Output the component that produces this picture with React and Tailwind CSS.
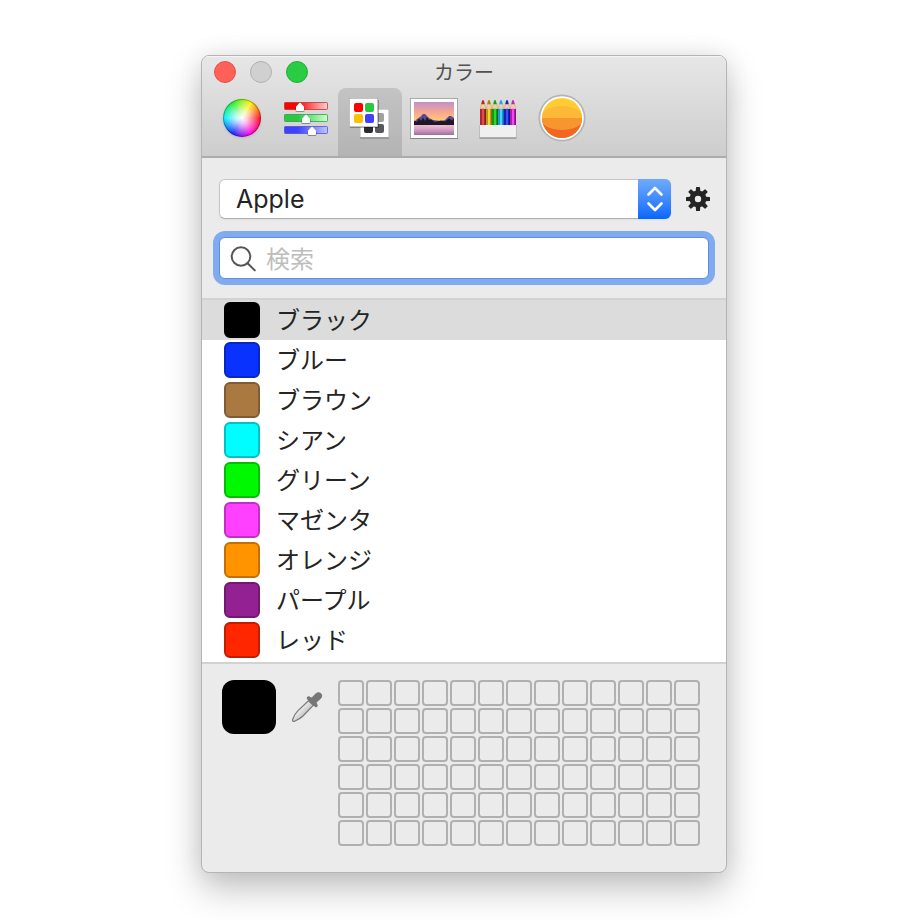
import { useState } from "react";
import clsx from "clsx";

const colors = [
  { name: "ブラック", swatch: "bg-[#000000] border-[#000000]" },
  { name: "ブルー", swatch: "bg-[#0a32ff] border-[#0726c2]" },
  { name: "ブラウン", swatch: "bg-[#aa7942] border-[#815c32]" },
  { name: "シアン", swatch: "bg-[#00fdff] border-[#00c0c2]" },
  { name: "グリーン", swatch: "bg-[#00f900] border-[#00bd00]" },
  { name: "マゼンタ", swatch: "bg-[#ff40ff] border-[#c230c2]" },
  { name: "オレンジ", swatch: "bg-[#ff9300] border-[#c27000]" },
  { name: "パープル", swatch: "bg-[#942192] border-[#70196f]" },
  { name: "レッド", swatch: "bg-[#ff2600] border-[#c21d00]" },
];

const lights = [
  { label: "閉じる", tone: "bg-[#ff6159] border-[#e25048]" },
  { label: "しまう", tone: "bg-[#d0d0d0] border-[#b0b0b0]" },
  { label: "拡大", tone: "bg-[#29cc42] border-[#1fb033]" },
];

function WheelIcon() {
  return (
    <span className="block size-[38px] rounded-full border border-black/30 bg-[radial-gradient(circle,#fff_0%,rgba(255,255,255,0.75)_22%,rgba(255,255,255,0)_68%),conic-gradient(from_90deg,#ff1020,#ff00e0,#1a20ff,#00f0ff,#20f020,#fff000,#ff1020)] bg-origin-border shadow-sm" />
  );
}

function SlidersIcon() {
  const rows = [
    { id: "r", y: 1, a: "#ff0000", b: "#ffd0d0", s: "#b83030", x: 17 },
    { id: "g", y: 13, a: "#28c840", b: "#d0ffd0", s: "#2f9a42", x: 23 },
    { id: "b", y: 25, a: "#4040ff", b: "#c0c4ff", s: "#4450cf", x: 29 },
  ];
  return (
    <svg width="46" height="38" viewBox="0 -2 46 38" aria-hidden="true">
      <defs>
        {rows.map((r) => (
          <linearGradient key={r.id} id={"track-" + r.id}>
            <stop offset="0.3" stopColor={r.a} />
            <stop offset="1" stopColor={r.b} />
          </linearGradient>
        ))}
      </defs>
      {rows.map((r) => (
        <g key={r.id}>
          <rect x="1.5" y={r.y + 0.5} width="43" height="7" rx="0.8" fill={"url(#track-" + r.id + ")"} stroke={r.s} strokeOpacity="0.75" />
          <path d={`M${r.x - 4.4} ${r.y + 5.2}L${r.x - 1} ${r.y + 1.5}Q${r.x} ${r.y + 0.4} ${r.x + 1} ${r.y + 1.5}L${r.x + 4.4} ${r.y + 5.2}V${r.y + 9}Q${r.x + 4.4} ${r.y + 10} ${r.x + 3} ${r.y + 10}H${r.x - 3}Q${r.x - 4.4} ${r.y + 10} ${r.x - 4.4} ${r.y + 9}Z`} fill="#000" opacity="0.35" />
          <path d={`M${r.x - 4} ${r.y + 4.7}L${r.x - 1} ${r.y + 1.2}Q${r.x} ${r.y + 0.2} ${r.x + 1} ${r.y + 1.2}L${r.x + 4} ${r.y + 4.7}V${r.y + 8}Q${r.x + 4} ${r.y + 9} ${r.x + 3} ${r.y + 9}H${r.x - 3}Q${r.x - 4} ${r.y + 9} ${r.x - 4} ${r.y + 8}Z`} fill="#fff" />
        </g>
      ))}
    </svg>
  );
}

function PalettesIcon() {
  return (
    <svg width="42" height="42" viewBox="1 0 42 42" aria-hidden="true">
      <rect x="12" y="12.5" width="29" height="29" fill="#7d7d7d" />
      <rect x="12" y="12" width="29" height="28.6" fill="#b0b0b0" />
      <rect x="12.5" y="12.6" width="28" height="27.4" fill="#fff" />
      <rect x="27" y="16" width="9" height="9" rx="2" fill="#9fa1a5" />
      <rect x="16" y="27" width="9" height="9" rx="2" fill="#2c2c2e" />
      <rect x="27" y="27" width="9" height="9" rx="2" fill="#56585b" />
      <rect x="2" y="3" width="29" height="28" fill="#000" opacity="0.3" />
      <rect x="1" y="1" width="29" height="29" fill="#999" />
      <rect x="1.6" y="1.6" width="27.8" height="27.8" fill="#fff" />
      <rect x="6" y="6" width="9" height="9" rx="2" fill="#ff0000" />
      <rect x="17" y="6" width="9" height="9" rx="2" fill="#28c840" />
      <rect x="6" y="17" width="9" height="9" rx="2" fill="#ffc000" />
      <rect x="17" y="17" width="9" height="9" rx="2" fill="#4040ff" />
    </svg>
  );
}

function PictureIcon() {
  return (
    <svg width="48" height="42" viewBox="0 -1 48 42" aria-hidden="true">
      <defs>
        <linearGradient id="sky" x2="0" y2="1">
          <stop offset="0" stopColor="#bf92cc" />
          <stop offset="0.4" stopColor="#f3a393" />
          <stop offset="0.75" stopColor="#ffc27a" />
          <stop offset="1" stopColor="#ffe49a" />
        </linearGradient>
        <linearGradient id="lake" x2="0" y2="1">
          <stop offset="0" stopColor="#e9bcd0" />
          <stop offset="0.4" stopColor="#dca4c6" />
          <stop offset="1" stopColor="#9d6c9f" />
        </linearGradient>
      </defs>
      <rect width="48" height="41" fill="#858585" />
      <rect width="48" height="40" fill="#aaa" />
      <rect x="1" y="1" width="46" height="39" fill="#fff" />
      <rect x="4" y="4" width="40" height="23" fill="url(#sky)" />
      <path d="M4 24L7 21L10 19L13 16L15 16L19 20L23 22L31 23L35 22L39 18H41L44 20V27H4Z" fill="#5c4893" />
      <path d="M4 22.5L7 24L9 20.5L11 23L13 19.5L15 23L17 19L19 22L21 21.5L25 24L31 22.5L35 23.5L39 20.5L42 22.5L44 20.5V27H4Z" fill="#1d1726" />
      <rect x="4" y="27" width="40" height="10" fill="url(#lake)" />
      <path d="M17 28.5H36" stroke="#f2cadb" opacity="0.4" />
    </svg>
  );
}

function PencilsIcon() {
  const pencils = [
    ["#b0252b", "#ee5a5a", "#8c1a20", "#cc1f1f"],
    ["#b89a10", "#ffe84a", "#8a7000", "#a88400"],
    ["#0c9a14", "#3ee83e", "#086e0e", "#14a01c"],
    ["#1a98dc", "#6edcff", "#0d6fae", "#24a8e6"],
    ["#1420b8", "#4a66ff", "#0c1488", "#1828c0"],
    ["#b814b0", "#ff5cff", "#860c80", "#c824c4"],
  ];
  return (
    <svg width="38" height="42" viewBox="0 -2 38 42" aria-hidden="true">
      {pencils.map(([side, light, dark, tip], i) => (
        <g key={tip} transform={`translate(${1 + i * 6} 0)`}>
          <path d="M0.2 10L1.6 3.8H4.4L5.8 10Z" fill="#f1d0a5" stroke="#b98d62" strokeWidth="0.4" />
          <path d="M1.3 5.2L2.1 1.6Q3 0.4 3.9 1.6L4.7 5.2Z" fill={tip} />
          <rect y="10" width="6" height="17" fill={side} />
          <rect x="2" y="9.5" width="2" height="17.5" fill={light} opacity="0.75" />
          <rect x="5" y="10" width="1" height="17" fill={dark} />
        </g>
      ))}
      <rect x="0.5" y="26" width="37" height="13.5" fill="#aaa" />
      <rect x="1" y="26" width="36" height="12.5" fill="#f0f0f0" />
      <path d="M0.5 39H37.5" stroke="#8b8b8b" />
    </svg>
  );
}

function SunsetIcon() {
  return (
    <svg width="48" height="48" viewBox="0 0 48 48" aria-hidden="true">
      <defs>
        <clipPath id="disc">
          <circle cx="24" cy="24" r="20" />
        </clipPath>
      </defs>
      <circle cx="24" cy="24" r="23.5" fill="#b3b3b3" />
      <circle cx="24" cy="24" r="21.8" fill="#fff" />
      <g clipPath="url(#disc)">
        <rect width="48" height="48" fill="#ffcd32" />
        <rect y="24" width="48" height="24" fill="#f26522" />
        <path d="M2 24A22 12 0 0 1 46 24Z" fill="#fdb938" />
        <path d="M2 24A22 12 0 0 0 46 24Z" fill="#f7952e" />
      </g>
    </svg>
  );
}

function GearIcon() {
  const teeth = [0, 45, 90, 135, 180, 225, 270, 315];
  return (
    <svg width="24" height="24" viewBox="0 0 24 24" aria-hidden="true">
      <circle cx="12" cy="12" r="5.8" fill="none" stroke="#242424" strokeWidth="5.2" />
      {teeth.map((angle) => (
        <path key={angle} d="M9.7 4.5L10 0.6Q10 0 10.6 0H13.4Q14 0 14 0.6L14.3 4.5Z" fill="#242424" transform={`rotate(${angle} 12 12)`} />
      ))}
    </svg>
  );
}

function DropperIcon() {
  return (
    <svg width="32" height="32" viewBox="0 0 32 32" aria-hidden="true">
      <defs>
        <linearGradient id="glass" x1="0" y1="0" x2="1" y2="1">
          <stop offset="0.3" stopColor="#fafafa" />
          <stop offset="0.7" stopColor="#b8b8b8" />
        </linearGradient>
      </defs>
      <path d="M17.5 9.8L7 19.6Q3.6 23 1.7 28.2Q1 31 3.6 30.2Q8.6 28.2 12 25L22.3 14.3Z" fill="url(#glass)" stroke="#777" strokeWidth="1.2" />
      <path d="M16.6 5.5Q18 4.6 19.4 6L20.8 6.6L24.6 2.6Q27.6 0.2 30 2.2Q32.6 4.8 29.8 7.8L25.6 11.6L26.1 13Q27.4 14.6 26.1 15.7Q24.8 17 23.5 15.6L16.4 8.5Q15 7 16.6 5.5Z" fill="#777" />
    </svg>
  );
}

const tools = [
  { label: "カラーホイール", Icon: WheelIcon },
  { label: "カラースライダ", Icon: SlidersIcon },
  { label: "カラーパレット", Icon: PalettesIcon },
  { label: "イメージパレット", Icon: PictureIcon },
  { label: "鉛筆", Icon: PencilsIcon },
  { label: "サンセット", Icon: SunsetIcon },
];

export default function App() {
  const [tool, setTool] = useState(2);
  const [selected, setSelected] = useState(0);

  return (
    <main className="min-h-screen bg-white pt-[55px] pb-12 pl-2 font-['Inter','Noto_Sans_CJK_JP',sans-serif] text-[#242424]">
      <section
        aria-label="カラー"
        className="mx-auto w-full max-w-[526px] overflow-hidden rounded-lg border border-[#b4b4b4] bg-[#ebebeb] shadow-[0_16px_36px_rgba(0,0,0,0.24),0_0_24px_rgba(0,0,0,0.08)]"
      >
        <header className="border-b-2 border-[#acacac] bg-linear-to-b from-[#e7e7e7] to-[#cdcdcd] shadow-[inset_0_1px_0_#f4f4f4]">
          <div className="grid h-8 grid-cols-3 items-center px-3">
            <div className="flex gap-3.5">
              {lights.map((l) => (
                <button key={l.label} type="button" aria-label={l.label} className={clsx("size-[22px] rounded-full border", l.tone)} />
              ))}
            </div>
            <h1 className="pt-0.5 text-center text-xl leading-7 text-[#505050]">カラー</h1>
          </div>
          <nav className="flex px-2">
            {tools.map(({ label, Icon }, i) => (
              <button
                key={label}
                type="button"
                aria-label={label}
                aria-pressed={tool === i}
                onClick={() => setTool(i)}
                className={clsx("flex h-[68px] w-16 justify-center rounded-t-lg pb-2", tool === i && "bg-black/12")}
              >
                <span className="flex h-[60px] items-center">
                  <Icon />
                </span>
              </button>
            ))}
          </nav>
        </header>

        <div className="flex flex-col gap-[18px] pt-[21px] pb-[19px]">
          <div className="flex items-center gap-[15px] pr-4 pl-[17px]">
            <div className="relative flex-1">
              <select aria-label="パレット" className="h-10 w-full appearance-none rounded-md border border-[#c6c6c6] border-b-[#b0b0b0] bg-white pr-10 pl-4 text-[25px] leading-9 shadow-xs outline-none">
                <option>Apple</option>
              </select>
              <span className="pointer-events-none absolute inset-y-0 right-0 flex w-[33px] items-center justify-center rounded-r-md bg-linear-to-b from-[#6fabfb] to-[#0466fd]">
                <svg width="18" height="26" viewBox="0 0 18 26" fill="none" stroke="#fff" strokeWidth="2.6" strokeLinecap="round" strokeLinejoin="round" aria-hidden="true">
                  <path d="M2.5 8.5L9 2L15.5 8.5M2.5 17.5L9 24L15.5 17.5" />
                </svg>
              </span>
            </div>
            <button type="button" aria-label="設定">
              <GearIcon />
            </button>
          </div>
          <label className="mx-[17px] flex h-[42px] items-center rounded-md border border-[#5f8edb] bg-white pl-[10px] ring-6 ring-[#80abf1]">
            <svg width="27" height="27" viewBox="0 -1 27 27" fill="none" stroke="#555" strokeWidth="2" strokeLinecap="round" aria-hidden="true">
              <circle cx="11" cy="10.5" r="9.3" />
              <path d="M17.6 17.2L24.8 24.4" />
            </svg>
            <input type="search" aria-label="検索" placeholder="検索" className="ml-[9px] h-10 min-w-0 flex-1 bg-transparent pt-0.5 text-2xl leading-9 outline-none placeholder:text-[#bdbdbd]" />
          </label>
        </div>

        <ul className="border-y-2 border-[#d2d2d2] bg-white pb-0.5">
          {colors.map((c, i) => (
            <li key={c.name}>
              <button
                type="button"
                aria-pressed={selected === i}
                onClick={() => setSelected(i)}
                className={clsx("flex h-10 w-full items-center gap-4 pl-[22px] text-left text-2xl leading-9", selected === i && "bg-[#dcdcdc]")}
              >
                <span className={clsx("size-9 rounded-md border-2", c.swatch)} />
                <span className="pt-0.5">{c.name}</span>
              </button>
            </li>
          ))}
        </ul>

        <footer className="flex items-start px-5 pt-4 pb-[26px]">
          <button type="button" aria-label="現在のカラー" className="size-[54px] rounded-xl bg-black" />
          <button type="button" aria-label="スポイト" className="mt-[11px] ml-[15px]">
            <DropperIcon />
          </button>
          <div className="ml-[15px] grid grid-cols-[repeat(13,26px)] gap-0.5">
            {Array.from({ length: 78 }, (_, i) => (
              <button key={i} type="button" aria-label={`カスタムカラー ${i + 1}`} className="size-[26px] rounded-sm border-2 border-[#b0b0b0]" />
            ))}
          </div>
        </footer>
      </section>
    </main>
  );
}
